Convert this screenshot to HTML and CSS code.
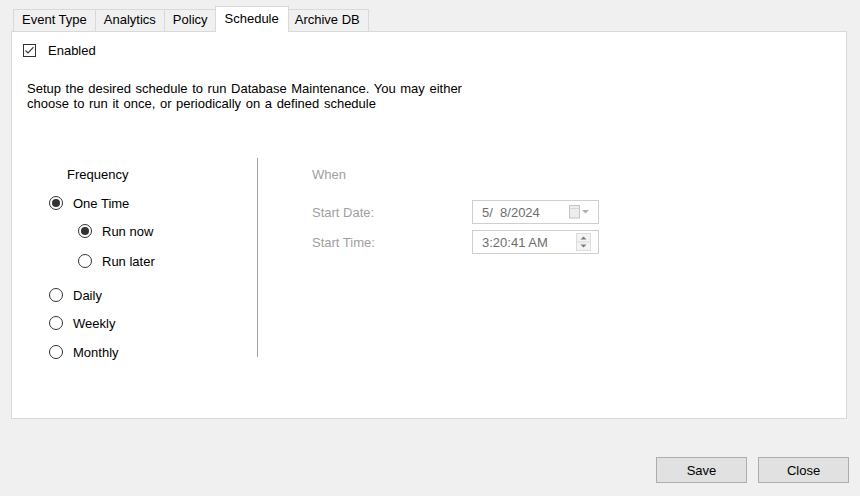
FILE: index.html
```html
<!DOCTYPE html>
<html>
<head>
	<meta charset="utf-8">
	<title>Database Maintenance</title>
	<link rel="stylesheet" href="styles.css">
</head>
<body>
	<div class="dialog">
		<div class="tabs">
			<div class="tab">Event Type</div>
			<div class="tab">Analytics</div>
			<div class="tab">Policy</div>
			<div class="tab active">Schedule</div>
			<div class="tab">Archive DB</div>
		</div>

		<div class="panel">
			<div class="check">
				<svg class="box" width="13" height="13" viewBox="0 0 13 13">
					<rect x="0.5" y="0.5" width="12" height="12" fill="#fff" stroke="#333"/>
					<path d="M2.5 6.5 L5 9 L10.5 3.2" fill="none" stroke="#333" stroke-width="1.1"/>
				</svg>
				<span>Enabled</span>
			</div>

			<p class="intro">Setup the desired schedule to run Database Maintenance. You may either<br>choose to run it once, or periodically on a defined schedule</p>

			<div class="schedule">
				<div class="frequency">
					<div class="caption">Frequency</div>
					<div class="radio on"><span class="mark"></span>One Time</div>
					<div class="radio sub on"><span class="mark"></span>Run now</div>
					<div class="radio sub later"><span class="mark"></span>Run later</div>
					<div class="radio daily"><span class="mark"></span>Daily</div>
					<div class="radio"><span class="mark"></span>Weekly</div>
					<div class="radio monthly"><span class="mark"></span>Monthly</div>
				</div>

				<div class="divider"></div>

				<div class="when">
					<div class="caption">When</div>
					<div class="field first">
						<span class="label">Start Date:</span>
						<div class="input">
							<span class="value">5/  8/2024</span>
							<svg width="22" height="14" viewBox="0 0 22 14">
								<rect x="0.5" y="0.5" width="10" height="12.5" fill="#ededed" stroke="#c4c4c4"/>
								<line x1="1" y1="3.5" x2="10" y2="3.5" stroke="#d6d6d6"/>
								<polygon points="13,5 20,5 16.5,8.5" fill="#b0b0b0"/>
							</svg>
						</div>
					</div>
					<div class="field">
						<span class="label">Start Time:</span>
						<div class="input">
							<span class="value">3:20:41 AM</span>
							<svg width="15" height="18" viewBox="0 0 15 18">
								<rect x="0.5" y="0.5" width="14" height="17" fill="#f3f3f3" stroke="#dcdcdc"/>
								<line x1="1" y1="9" x2="14" y2="9" stroke="#dcdcdc"/>
								<polygon points="4.5,6.5 10.5,6.5 7.5,3.5" fill="#7a7a7a"/>
								<polygon points="4.5,11.5 10.5,11.5 7.5,14.5" fill="#7a7a7a"/>
							</svg>
						</div>
					</div>
				</div>
			</div>
		</div>

		<div class="footer">
			<button class="btn">Save</button>
			<button class="btn">Close</button>
		</div>
	</div>
</body>
</html>
```

FILE: styles.css
```css
*{
	margin: 0;
	padding: 0;
	box-sizing: border-box;
}
body{
	background: #f0f0f0;
	font-family: "Liberation Sans", Arial, sans-serif;
	font-size: 13px;
	color: #000;
}
.dialog{
	width: 860px;
	height: 496px;
}
.tabs{
	height: 31px;
	padding-left: 13px;
	display: flex;
	align-items: flex-end;
}
.tab{
	height: 22px;
	line-height: 20px;
	padding: 0 8px;
	border: 1px solid #d9d9d9;
	border-bottom: none;
	background: #f0f0f0;
	margin-left: -1px;
	white-space: nowrap;
}
.tab:first-child{
	margin-left: 0;
}
.tab.active{
	height: 26px;
	line-height: 23px;
	padding: 0 9px;
	margin: 0 -2px -1px -2px;
	background: #fff;
	position: relative;
	z-index: 1;
}
.panel{
	margin-left: 11px;
	width: 836px;
	height: 388px;
	background: #fff;
	border: 1px solid #d9d9d9;
	padding-top: 11px;
}
.check{
	display: flex;
	align-items: center;
	height: 14px;
	margin-left: 11px;
}
.check .box{
	margin-right: 12px;
}
.intro{
	margin: 24px 0 0 15px;
	line-height: 15px;
	word-spacing: 1px;
}
.schedule{
	display: flex;
	margin-top: 47px;
}
.frequency{
	width: 245px;
	padding: 3px 0 0 37px;
}
.caption{
	height: 28px;
	line-height: 28px;
}
.frequency .caption{
	margin-left: 18px;
}
.radio{
	height: 28px;
	display: flex;
	align-items: center;
}
.radio .mark{
	width: 14px;
	height: 14px;
	border: 1px solid #333;
	border-radius: 50%;
	margin-right: 10px;
	display: flex;
	align-items: center;
	justify-content: center;
}
.radio.on .mark::after{
	content: "";
	width: 8px;
	height: 8px;
	border-radius: 50%;
	background: #333;
}
.radio.sub{
	margin-left: 29px;
}
.radio.later{
	margin-top: 2px;
}
.radio.daily{
	margin-top: 6px;
}
.radio.monthly{
	margin-top: 1px;
}
.divider{
	width: 1px;
	height: 199px;
	background: #a0a0a0;
}
.when{
	padding: 3px 0 0 54px;
	color: #a0a0a0;
}
.field{
	display: flex;
	align-items: center;
	margin-top: 6px;
}
.field.first{
	margin-top: 11px;
}
.label{
	width: 160px;
}
.input{
	width: 127px;
	height: 24px;
	border: 1px solid #cfcfcf;
	background: #fff;
	color: #6d6d6d;
	padding: 0 7px 0 9px;
	display: flex;
	align-items: center;
	justify-content: space-between;
}
.value{
	white-space: pre;
}
.footer{
	display: flex;
	justify-content: flex-end;
	gap: 11px;
	padding-right: 11px;
	margin-top: 38px;
}
.btn{
	width: 91px;
	height: 26px;
	background: #e1e1e1;
	border: 1px solid #adadad;
	font-family: "Liberation Sans", Arial, sans-serif;
	font-size: 13px;
	color: #000;
}
```
